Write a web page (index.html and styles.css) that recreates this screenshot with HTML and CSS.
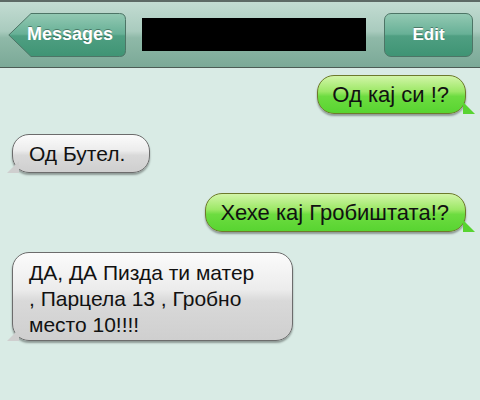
FILE: index.html
```html
<!DOCTYPE html>
<html lang="en">
<head>
    <meta charset="UTF-8">
    <meta name="viewport" content="width=device-width, initial-scale=1.0">
    <title>Messages</title>
    <link rel="stylesheet" href="styles.css">
</head>
<body>
    <div class="topbar">
        <div class="back-btn">
            <svg class="back-shape" width="118" height="44" viewBox="0 0 118 44">
                <defs>
                    <linearGradient id="btnGrad" x1="0" y1="0" x2="0" y2="1">
                        <stop offset="0" stop-color="#93c9b3"/>
                        <stop offset="0.48" stop-color="#67b096"/>
                        <stop offset="0.52" stop-color="#4f9f82"/>
                        <stop offset="1" stop-color="#3f9474"/>
                    </linearGradient>
                </defs>
                <path d="M23 0.5 H111.5 Q117.5 0.5 117.5 6.5 V37.5 Q117.5 43.5 111.5 43.5 H23 L0.8 22 Z" fill="url(#btnGrad)" stroke="#4d7566" stroke-width="1"/>
            </svg>
            <span class="btn-label">Messages</span>
        </div>
        <div class="title-box"></div>
        <div class="edit-btn">Edit</div>
    </div>

    <div class="chat">
        <div class="bubble sent">Од кај си !?</div>
        <div class="bubble received">Од Бутел.</div>
        <div class="bubble sent">Хехе кај Гробиштата!?</div>
        <div class="bubble received long">ДА, ДА Пизда ти матер<br>, Парцела 13 , Гробно<br>место 10!!!!</div>
    </div>
</body>
</html>
```

FILE: styles.css
```css
* {
    margin: 0;
    padding: 0;
    box-sizing: border-box;
}

body {
    width: 480px;
    height: 400px;
    overflow: hidden;
    background: #d9ebe5;
    font-family: "Liberation Sans", Arial, sans-serif;
}

.topbar {
    height: 68px;
    display: flex;
    align-items: center;
    padding: 0 7px 0 8px;
    border-top: 2px solid #5d6a65;
    border-bottom: 1px solid #4c5c55;
    background: linear-gradient(#c3dcd2, #a9cbbe 45%, #8fb9a8 55%, #7ba997);
}

.back-btn {
    position: relative;
    width: 118px;
    height: 44px;
    display: flex;
    align-items: center;
    justify-content: center;
    padding-left: 6px;
}

.back-shape {
    position: absolute;
    left: 0;
    top: 0;
}

.btn-label {
    position: relative;
    color: #fff;
    font-weight: bold;
    font-size: 18px;
    text-shadow: 0 -1px 0 rgba(0, 0, 0, 0.35);
}

.title-box {
    width: 224px;
    height: 33px;
    margin-left: 16px;
    background: #000;
}

.edit-btn {
    width: 89px;
    height: 44px;
    margin-left: auto;
    display: flex;
    align-items: center;
    justify-content: center;
    border: 1px solid #4d7566;
    border-radius: 7px;
    background: linear-gradient(#93c9b3, #67b096 48%, #4f9f82 52%, #3f9474);
    color: #fff;
    font-weight: bold;
    font-size: 17px;
    text-shadow: 0 -1px 0 rgba(0, 0, 0, 0.35);
}

.chat {
    display: flex;
    flex-direction: column;
    align-items: flex-start;
    padding: 7px 14px 0 12px;
    gap: 20px;
}

.bubble {
    position: relative;
    font-size: 21px;
    line-height: 24px;
    color: #111;
    padding: 7px 16px 6px;
    border-radius: 17px;
    box-shadow: 0 2px 2px rgba(0, 0, 0, 0.35);
}

.sent {
    align-self: flex-end;
    font-size: 22px;
    padding-left: 14px;
    border: 1px solid #6d7a2c;
    background: linear-gradient(#d2f5a8, #9ce866 42%, #6ddc40 55%, #58d431);
}

.received {
    padding-right: 24px;
    border: 1px solid #6c6c6c;
    background: linear-gradient(#fbfbfb, #ececec 42%, #d9d9d9 55%, #cfcfcf);
}

.sent::after,
.received::after {
    content: "";
    position: absolute;
    bottom: -1px;
    width: 12px;
    height: 12px;
}

.sent::after {
    right: -10px;
    background: #58d431;
    clip-path: polygon(0 0, 100% 100%, 0 100%);
}

.received::after {
    left: -6px;
    background: #cfcfcf;
    clip-path: polygon(100% 0, 100% 100%, 0 100%);
}

.long {
    line-height: 26px;
    padding: 7px 38px 2px 16px;
}
```
